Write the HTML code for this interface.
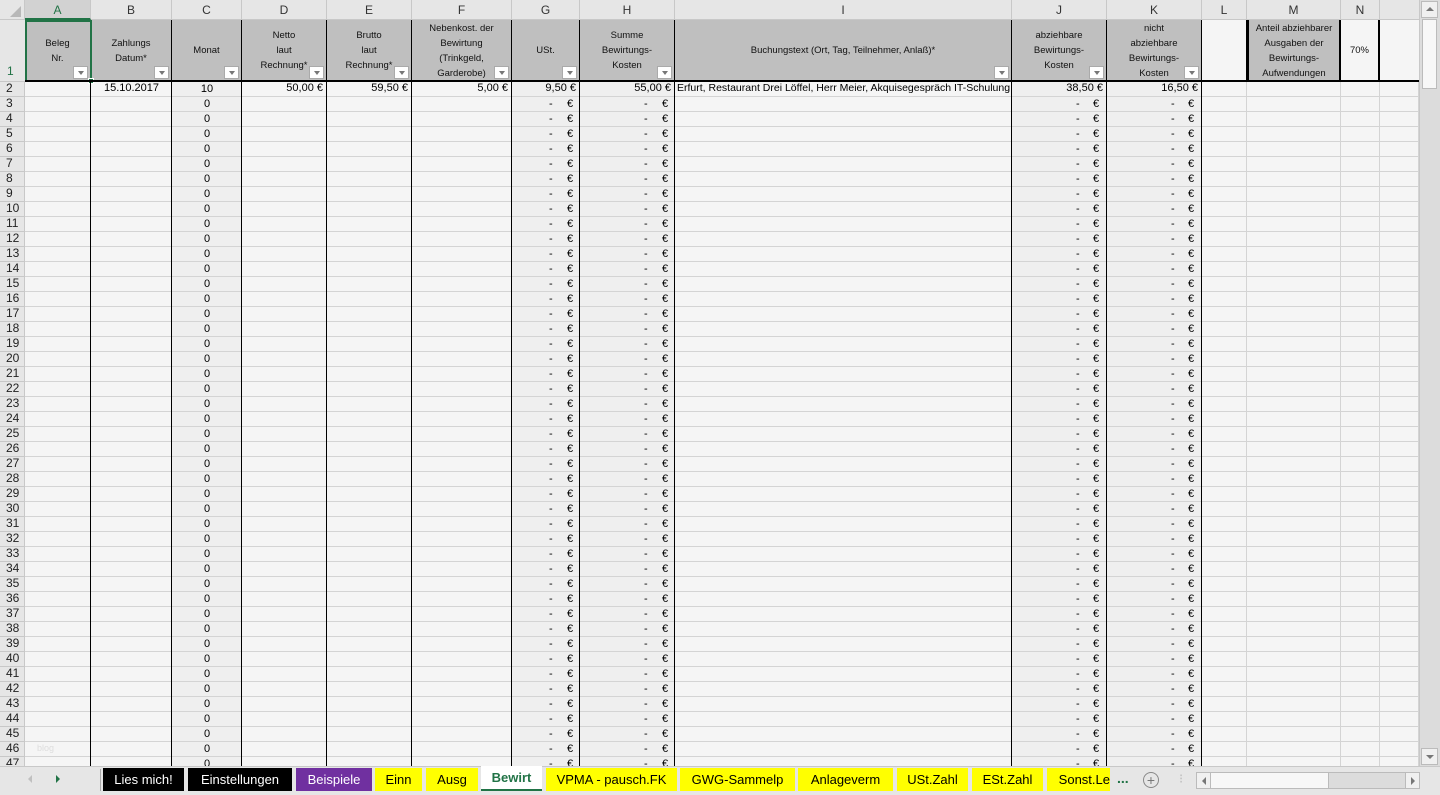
<!DOCTYPE html>
<html><head><meta charset="utf-8">
<style>
*{margin:0;padding:0;box-sizing:border-box}
body{width:1440px;height:795px;overflow:hidden;background:#f5f5f5;font-family:"Liberation Sans",sans-serif;font-size:11px;color:#000;position:relative}
.a{position:absolute}
.ch{top:0;height:20px;background:#e6e6e6;border-right:1px solid #c8c8c8;border-bottom:1px solid #c8c8c8;text-align:center;line-height:20px;font-size:12px;color:#333}
.h1{top:20px;height:61px;background:#bfbfbf;border-right:1px solid #000;display:flex;align-items:center;justify-content:center;text-align:center;font-size:9.5px;line-height:15px;color:#111}
.fb{position:absolute;right:2px;bottom:2px;width:15px;height:13px;background:#fff;border:1px solid #aaa}
.fb:after{content:"";position:absolute;left:4px;top:4px;border-left:3px solid transparent;border-right:3px solid transparent;border-top:4px solid #777}
.col{top:82px;height:684px;line-height:15px;white-space:pre;font-size:11px;overflow:hidden}
.vl{top:20px;height:746px;width:1px;background:#000}
.gl{top:20px;height:746px;width:1px;background:#d4d4d4}
.tab{top:768px;height:23px;line-height:23px;font-size:13px;text-align:center;background:#ffff00;color:#000}
</style></head><body>
<div class="a" style="left:172px;top:82px;width:70px;height:684px;background:#efefef"></div>
<div class="a" style="left:512px;top:82px;width:163px;height:684px;background:#efefef"></div>
<div class="a" style="left:1012px;top:82px;width:190px;height:684px;background:#efefef"></div>
<div class="a" style="left:25px;top:82px;width:1395px;height:684px;background:repeating-linear-gradient(to bottom,transparent 0 14px,#d4d4d4 14px 15px)"></div>
<div class="a" style="left:0;top:0;width:25px;height:766px;background:repeating-linear-gradient(to bottom,#e6e6e6 0 14px,#c8c8c8 14px 15px);background-position:0 82px;border-right:1px solid #c8c8c8"></div>
<div class="a" style="left:0;top:20px;width:25px;height:62px;background:#e6e6e6;border-bottom:1px solid #c8c8c8"></div>
<div class="a" style="left:0;top:0;width:25px;height:20px;background:#e6e6e6;border-right:1px solid #c8c8c8;border-bottom:1px solid #c8c8c8"></div>
<div class="a" style="left:10px;top:6px;width:0;height:0;border-left:11px solid transparent;border-bottom:11px solid #b8b8b8"></div>
<div class="a" style="left:7px;top:64px;font-size:12px;color:#217346">1</div>
<div class="a col" style="left:6px;width:19px;font-size:12px;color:#222;line-height:15px;top:81px">2
3
4
5
6
7
8
9
10
11
12
13
14
15
16
17
18
19
20
21
22
23
24
25
26
27
28
29
30
31
32
33
34
35
36
37
38
39
40
41
42
43
44
45
46
47</div>
<div class="a ch" style="left:25px;width:66px;background:#d2d2d2;color:#217346;border-bottom:2px solid #217346">A</div>
<div class="a ch" style="left:91px;width:81px">B</div>
<div class="a ch" style="left:172px;width:70px">C</div>
<div class="a ch" style="left:242px;width:85px">D</div>
<div class="a ch" style="left:327px;width:85px">E</div>
<div class="a ch" style="left:412px;width:100px">F</div>
<div class="a ch" style="left:512px;width:68px">G</div>
<div class="a ch" style="left:580px;width:95px">H</div>
<div class="a ch" style="left:675px;width:337px">I</div>
<div class="a ch" style="left:1012px;width:95px">J</div>
<div class="a ch" style="left:1107px;width:95px">K</div>
<div class="a ch" style="left:1202px;width:45px">L</div>
<div class="a ch" style="left:1247px;width:94px">M</div>
<div class="a ch" style="left:1341px;width:39px">N</div>
<div class="a ch" style="left:1380px;width:40px">&nbsp;</div>
<div class="a h1" style="left:25px;width:66px">Beleg<br>Nr.<span class="fb"></span></div>
<div class="a h1" style="left:91px;width:81px">Zahlungs<br>Datum*<span class="fb"></span></div>
<div class="a h1" style="left:172px;width:70px">Monat<span class="fb"></span></div>
<div class="a h1" style="left:242px;width:85px">Netto<br>laut<br>Rechnung*<span class="fb"></span></div>
<div class="a h1" style="left:327px;width:85px">Brutto<br>laut<br>Rechnung*<span class="fb"></span></div>
<div class="a h1" style="left:412px;width:100px">Nebenkost. der<br>Bewirtung<br>(Trinkgeld,<br>Garderobe)<span class="fb"></span></div>
<div class="a h1" style="left:512px;width:68px">USt.<span class="fb"></span></div>
<div class="a h1" style="left:580px;width:95px">Summe<br>Bewirtungs-<br>Kosten<span class="fb"></span></div>
<div class="a h1" style="left:675px;width:337px">Buchungstext (Ort, Tag, Teilnehmer, Anlaß)*<span class="fb"></span></div>
<div class="a h1" style="left:1012px;width:95px">abziehbare<br>Bewirtungs-<br>Kosten<span class="fb"></span></div>
<div class="a h1" style="left:1107px;width:95px">nicht<br>abziehbare<br>Bewirtungs-<br>Kosten<span class="fb"></span></div>
<div class="a h1" style="left:1202px;width:45px;background:#f5f5f5"></div>
<div class="a h1" style="left:1247px;width:94px;border-left:2px solid #000;border-right:2px solid #000">Anteil abziehbarer<br>Ausgaben der<br>Bewirtungs-<br>Aufwendungen</div>
<div class="a h1" style="left:1341px;width:39px;background:#f5f5f5;border-right:2px solid #000">70%</div>
<div class="a h1" style="left:1380px;width:40px;background:#f5f5f5;border-right:none"></div>
<div class="a" style="left:25px;top:20px;width:67px;height:62px;border:2px solid #217346"></div>
<div class="a" style="left:88px;top:78px;width:6px;height:6px;background:#217346;border:1px solid #fff"></div>
<div class="a" style="left:25px;top:80px;width:1395px;height:2px;background:#000"></div>
<div class="a vl" style="left:90px;top:82px;height:684px"></div>
<div class="a vl" style="left:171px;top:82px;height:684px"></div>
<div class="a vl" style="left:241px;top:82px;height:684px"></div>
<div class="a vl" style="left:326px;top:82px;height:684px"></div>
<div class="a vl" style="left:411px;top:82px;height:684px"></div>
<div class="a vl" style="left:511px;top:82px;height:684px"></div>
<div class="a vl" style="left:579px;top:82px;height:684px"></div>
<div class="a vl" style="left:674px;top:82px;height:684px"></div>
<div class="a vl" style="left:1011px;top:82px;height:684px"></div>
<div class="a vl" style="left:1106px;top:82px;height:684px"></div>
<div class="a vl" style="left:1201px;top:82px;height:684px"></div>
<div class="a gl" style="left:1246px;top:82px;height:684px"></div>
<div class="a gl" style="left:1340px;top:82px;height:684px"></div>
<div class="a gl" style="left:1379px;top:82px;height:684px"></div>
<div class="a gl" style="left:1418px;top:82px;height:684px"></div>
<div class="a" style="left:91px;top:82px;width:81px;text-align:center">15.10.2017</div>
<div class="a" style="left:242px;top:82px;width:81px;text-align:right">50,00 €</div>
<div class="a" style="left:327px;top:82px;width:81px;text-align:right">59,50 €</div>
<div class="a" style="left:412px;top:82px;width:96px;text-align:right">5,00 €</div>
<div class="a" style="left:512px;top:82px;width:64px;text-align:right">9,50 €</div>
<div class="a" style="left:580px;top:82px;width:91px;text-align:right">55,00 €</div>
<div class="a" style="left:677px;top:82px;width:334px;white-space:nowrap;font-size:10.5px">Erfurt, Restaurant Drei Löffel, Herr Meier, Akquisegespräch IT-Schulung</div>
<div class="a" style="left:1012px;top:82px;width:91px;text-align:right">38,50 €</div>
<div class="a" style="left:1107px;top:82px;width:91px;text-align:right">16,50 €</div>
<div class="a" style="left:37px;top:743px;color:#ddd;font-size:9px">blog</div>
<div class="a col" style="left:172px;width:70px;text-align:center;top:82px">10
0
0
0
0
0
0
0
0
0
0
0
0
0
0
0
0
0
0
0
0
0
0
0
0
0
0
0
0
0
0
0
0
0
0
0
0
0
0
0
0
0
0
0
0
0</div>
<div class="a col" style="left:549px;top:97px;width:8px">-
-
-
-
-
-
-
-
-
-
-
-
-
-
-
-
-
-
-
-
-
-
-
-
-
-
-
-
-
-
-
-
-
-
-
-
-
-
-
-
-
-
-
-
-</div>
<div class="a col" style="left:567px;top:97px;width:10px">€
€
€
€
€
€
€
€
€
€
€
€
€
€
€
€
€
€
€
€
€
€
€
€
€
€
€
€
€
€
€
€
€
€
€
€
€
€
€
€
€
€
€
€
€</div>
<div class="a col" style="left:644px;top:97px;width:8px">-
-
-
-
-
-
-
-
-
-
-
-
-
-
-
-
-
-
-
-
-
-
-
-
-
-
-
-
-
-
-
-
-
-
-
-
-
-
-
-
-
-
-
-
-</div>
<div class="a col" style="left:662px;top:97px;width:10px">€
€
€
€
€
€
€
€
€
€
€
€
€
€
€
€
€
€
€
€
€
€
€
€
€
€
€
€
€
€
€
€
€
€
€
€
€
€
€
€
€
€
€
€
€</div>
<div class="a col" style="left:1076px;top:97px;width:8px">-
-
-
-
-
-
-
-
-
-
-
-
-
-
-
-
-
-
-
-
-
-
-
-
-
-
-
-
-
-
-
-
-
-
-
-
-
-
-
-
-
-
-
-
-</div>
<div class="a col" style="left:1093px;top:97px;width:10px">€
€
€
€
€
€
€
€
€
€
€
€
€
€
€
€
€
€
€
€
€
€
€
€
€
€
€
€
€
€
€
€
€
€
€
€
€
€
€
€
€
€
€
€
€</div>
<div class="a col" style="left:1171px;top:97px;width:8px">-
-
-
-
-
-
-
-
-
-
-
-
-
-
-
-
-
-
-
-
-
-
-
-
-
-
-
-
-
-
-
-
-
-
-
-
-
-
-
-
-
-
-
-
-</div>
<div class="a col" style="left:1188px;top:97px;width:10px">€
€
€
€
€
€
€
€
€
€
€
€
€
€
€
€
€
€
€
€
€
€
€
€
€
€
€
€
€
€
€
€
€
€
€
€
€
€
€
€
€
€
€
€
€</div>
<div class="a" style="left:1419px;top:0;width:21px;height:766px;background:#dcdcdc;border-left:1px solid #c8c8c8"></div>
<div class="a" style="left:1421px;top:1px;width:17px;height:17px;background:#f0f0f0;border:1px solid #bbb"></div>
<div class="a" style="left:1426px;top:7px;border-left:4px solid transparent;border-right:4px solid transparent;border-bottom:4px solid #777"></div>
<div class="a" style="left:1422px;top:19px;width:15px;height:70px;background:#f7f7f7;border:1px solid #bbb"></div>
<div class="a" style="left:1421px;top:748px;width:17px;height:17px;background:#f0f0f0;border:1px solid #bbb"></div>
<div class="a" style="left:1426px;top:755px;border-left:4px solid transparent;border-right:4px solid transparent;border-top:4px solid #777"></div>
<div class="a" style="left:0;top:766px;width:1440px;height:29px;background:#e6e6e6;border-top:1px solid #c8c8c8"></div>
<div class="a" style="left:28px;top:775px;border-top:4px solid transparent;border-bottom:4px solid transparent;border-right:4px solid #c0c0c0"></div>
<div class="a" style="left:56px;top:775px;border-top:4px solid transparent;border-bottom:4px solid transparent;border-left:4px solid #217346"></div>
<div class="a" style="left:100px;top:769px;width:1px;height:22px;background:#aaa"></div>
<div class="a tab" style="left:103px;width:81px;background:#000;color:#fff">Lies mich!</div>
<div class="a tab" style="left:188px;width:104px;background:#000;color:#fff">Einstellungen</div>
<div class="a tab" style="left:296px;width:76px;background:#7030a0;color:#fff">Beispiele</div>
<div class="a tab" style="left:375px;width:47px">Einn</div>
<div class="a tab" style="left:426px;width:52px">Ausg</div>
<div class="a tab" style="left:481px;top:766px;height:25px;width:61px;background:#fff;color:#217346;font-weight:bold;border-bottom:2px solid #217346">Bewirt</div>
<div class="a tab" style="left:546px;width:131px">VPMA - pausch.FK</div>
<div class="a tab" style="left:680px;width:115px">GWG-Sammelp</div>
<div class="a tab" style="left:798px;width:95px">Anlageverm</div>
<div class="a tab" style="left:897px;width:71px">USt.Zahl</div>
<div class="a tab" style="left:972px;width:71px">ESt.Zahl</div>
<div class="a tab" style="left:1047px;width:63px;text-align:right;overflow:hidden;white-space:nowrap">Sonst.Le</div>
<div class="a" style="left:1117px;top:770px;font-size:14px;color:#217346;font-weight:bold">...</div>
<div class="a" style="left:1143px;top:772px;width:16px;height:16px;border:1px solid #888;border-radius:50%;text-align:center;line-height:14px;font-size:14px;color:#777">+</div>
<div class="a" style="left:1179px;top:771px;color:#bbb;font-size:13px">⁝</div>
<div class="a" style="left:1196px;top:772px;width:224px;height:17px;background:#dcdcdc;border:1px solid #bbb"></div>
<div class="a" style="left:1197px;top:773px;width:14px;height:15px;background:#f0f0f0;border-right:1px solid #bbb"></div>
<div class="a" style="left:1202px;top:777px;border-top:4px solid transparent;border-bottom:4px solid transparent;border-right:4px solid #777"></div>
<div class="a" style="left:1211px;top:773px;width:118px;height:15px;background:#f7f7f7;border-right:1px solid #bbb"></div>
<div class="a" style="left:1405px;top:773px;width:14px;height:15px;background:#f0f0f0;border-left:1px solid #bbb"></div>
<div class="a" style="left:1411px;top:777px;border-top:4px solid transparent;border-bottom:4px solid transparent;border-left:4px solid #777"></div>
</body></html>
